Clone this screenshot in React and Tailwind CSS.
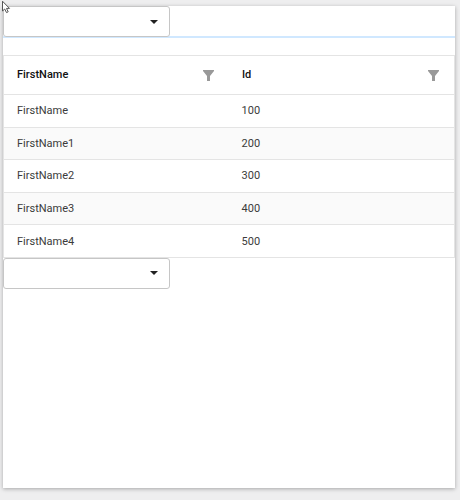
const rows = [
  { name: 'FirstName', id: 100 },
  { name: 'FirstName1', id: 200 },
  { name: 'FirstName2', id: 300 },
  { name: 'FirstName3', id: 400 },
  { name: 'FirstName4', id: 500 },
]

function Dropdown() {
  return (
    <button
      type="button"
      aria-label="Select"
      className="flex h-[31px] w-[167px] shrink-0 items-center justify-end rounded-[3px] border border-[#c6c6c6] bg-white pr-[11px]"
    >
      <svg width="8" height="4" viewBox="0 0 8 4">
        <path d="M0 0h8L4 4z" fill="#222" />
      </svg>
    </button>
  )
}

function FilterIcon() {
  return (
    <svg width="11" height="11" viewBox="0 0 11 11">
      <path d="M0 0h11v1L7 6v5H4V6L0 1z" fill="#999" />
    </svg>
  )
}

function HeaderCell({ label }) {
  return (
    <th className="p-0 text-left font-medium text-[#111]">
      <div className="flex items-center justify-between pr-[15px] pl-[13px]">
        {label}
        <FilterIcon />
      </div>
    </th>
  )
}

export default function App() {
  return (
    <div className="relative h-[500px] w-[460px] overflow-hidden bg-[#eeeeef] pt-1.5 pl-[3px] font-['Roboto',sans-serif] text-[11px] leading-4 text-[#3b3b3b]">
      <div className="h-[482px] w-[452px] bg-white shadow-[0_1px_4px_rgba(0,0,0,0.3)]">
        <div className="flex h-8 border-b-2 border-[#d0e8ff]">
          <Dropdown />
        </div>
        <div className="h-[17px]" />
        <table className="w-full table-fixed border-collapse border border-[#e4e4e4]">
          <thead>
            <tr className="h-[39px] border-b border-[#e4e4e4]">
              <HeaderCell label="FirstName" />
              <HeaderCell label="Id" />
            </tr>
          </thead>
          <tbody>
            {rows.map((row) => (
              <tr key={row.id} className="h-[32.6px] border-b border-[#e4e4e4] even:bg-[#fafafa]">
                <td className="p-0 pt-px pl-[13px]">{row.name}</td>
                <td className="p-0 pt-px pl-[12.5px] tracking-[0.1px]">{row.id}</td>
              </tr>
            ))}
          </tbody>
        </table>
        <Dropdown />
      </div>

      {/* mouse pointer */}
      <svg className="absolute top-0 left-0" width="12" height="14" viewBox="0 0 12 14">
        <path d="M2.5 1.2v9.8l2.2-2 1.8 3.6 1.7-.8-1.7-3.4h3z" fill="#fff" stroke="#555" />
      </svg>
    </div>
  )
}
